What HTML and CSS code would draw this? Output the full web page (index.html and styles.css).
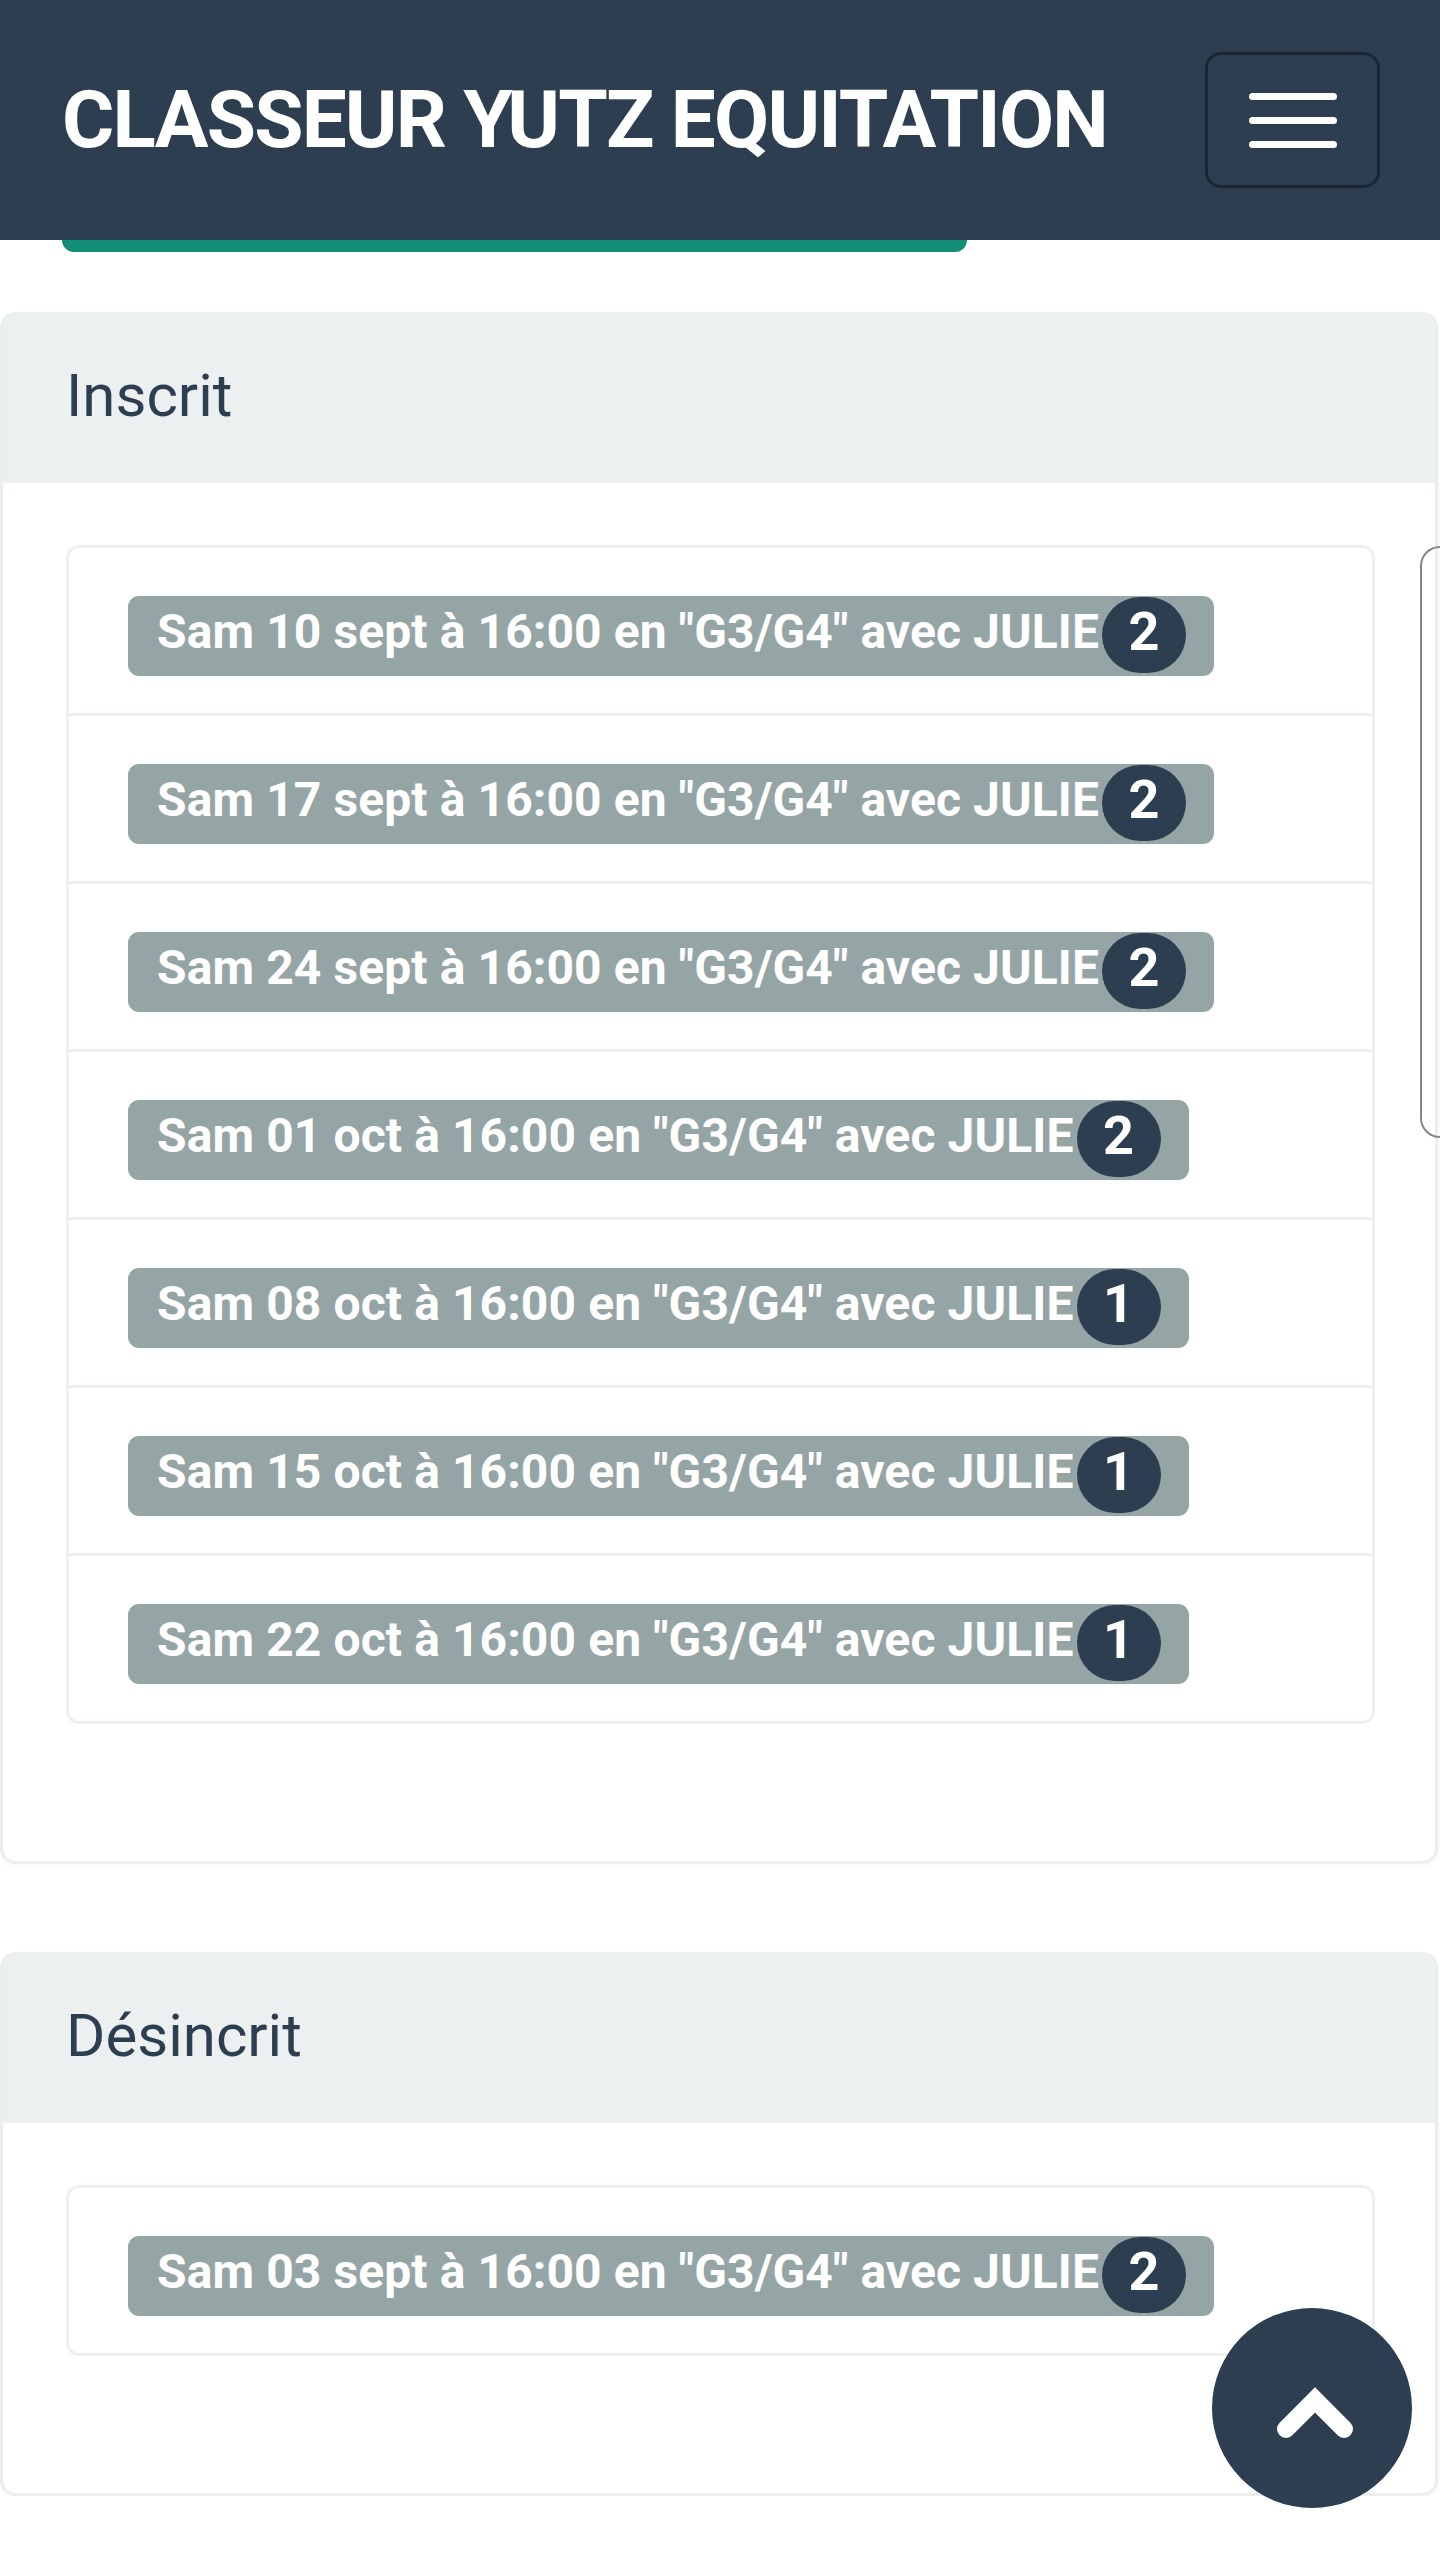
FILE: index.html
```
<!DOCTYPE html>
<html lang="fr">
<head>
	<meta charset="UTF-8">
	<meta name="viewport" content="width=device-width, initial-scale=1.0">
	<title>Classeur Yutz Equitation</title>
	<link rel="stylesheet" href="styles.css">
</head>

<body>
	<header class="navbar">
		<h1 class="brand">CLASSEUR YUTZ EQUITATION</h1>
		<button type="button" class="toggler" title="Menu">
			<span class="toggler-bar"></span>
			<span class="toggler-bar"></span>
			<span class="toggler-bar"></span>
		</button>
	</header>
	<div class="btn-peek"></div>

	<main>
		<section class="card">
			<h2 class="card-header">Inscrit</h2>
			<div class="card-body">
				<ul class="list-group">
					<li class="list-item"><span class="badge">Sam 10 sept à 16:00 en "G3/G4" avec JULIE<span class="pill">2</span></span></li>
					<li class="list-item"><span class="badge">Sam 17 sept à 16:00 en "G3/G4" avec JULIE<span class="pill">2</span></span></li>
					<li class="list-item"><span class="badge">Sam 24 sept à 16:00 en "G3/G4" avec JULIE<span class="pill">2</span></span></li>
					<li class="list-item"><span class="badge">Sam 01 oct à 16:00 en "G3/G4" avec JULIE<span class="pill">2</span></span></li>
					<li class="list-item"><span class="badge">Sam 08 oct à 16:00 en "G3/G4" avec JULIE<span class="pill">1</span></span></li>
					<li class="list-item"><span class="badge">Sam 15 oct à 16:00 en "G3/G4" avec JULIE<span class="pill">1</span></span></li>
					<li class="list-item"><span class="badge">Sam 22 oct à 16:00 en "G3/G4" avec JULIE<span class="pill">1</span></span></li>
				</ul>
			</div>
		</section>

		<section class="card">
			<h2 class="card-header">Désincrit</h2>
			<div class="card-body">
				<ul class="list-group">
					<li class="list-item"><span class="badge">Sam 03 sept à 16:00 en "G3/G4" avec JULIE<span class="pill">2</span></span></li>
				</ul>
			</div>
		</section>
	</main>

	<div class="popover-edge"></div>

	<button type="button" class="to-top" title="Haut de page">
		<svg width="200" height="200" viewBox="0 0 200 200"><polyline points="74,121 103,92 132,121" fill="none" stroke="#fff" stroke-width="18" stroke-linejoin="miter" stroke-linecap="round"/></svg>
	</button>
</body>

</html>
```

FILE: styles.css
```
body {
	margin: 0;
	font-family: Roboto, "Noto Sans", sans-serif;
	color: #2c3e50;
	background: #fff;
}

.navbar {
	height: 240px;
	box-sizing: border-box;
	padding: 0 60px 0 62px;
	display: flex;
	align-items: center;
	justify-content: space-between;
	background-color: #2c3e50;
}
.brand {margin: 0; font-size: 80px; font-weight: 700; color: #fff; line-height: 1; letter-spacing: -1.8px;}
.toggler {
	width: 175px; height: 136px;
	box-sizing: border-box;
	border: 3px solid #1b2633;
	border-radius: 16px;
	background: transparent;
	display: flex; flex-direction: column; align-items: center; justify-content: center;
	gap: 17px;
	padding: 0;
}
.toggler-bar {display: block; width: 88px; height: 7px; border-radius: 4px; background: #fff;}

.btn-peek {margin-left: 62px; width: 905px; height: 12px; background: #138e76; border-radius: 0 0 14px 14px;}

main {padding-top: 60px; display: flex; flex-direction: column; gap: 88px;}

.card {
	width: 1438px;
	box-sizing: border-box;
	border: 3px solid #eaeeef;
	border-radius: 16px;
	box-shadow: 0 2px 4px rgba(0, 0, 0, 0.04);
	overflow: hidden;
}
.card-header {
	margin: 0;
	height: 168px;
	box-sizing: border-box;
	padding: 0 0 6px 63px;
	display: flex; align-items: center;
	background: #ecf0f1;
	font-size: 60px; font-weight: 400; line-height: 1;
}
.card-body {padding: 62px 60px 137px 63px;}

.list-group {list-style: none; margin: 0; padding: 0; border: 3px solid #ecf0f1; border-radius: 13px;}
.list-item {padding: 48px 59px 37px; display: flex;}
.list-item + .list-item {border-top: 3px solid #ecf0f1;}

.badge {
	height: 80px;
	box-sizing: border-box;
	padding: 0 28px 9px 29px;
	display: inline-flex; align-items: center;
	background: #95a5a6;
	border-radius: 11px;
	color: #fff;
	font-size: 48px; font-weight: 700; line-height: 1; letter-spacing: 0.1px;
	white-space: nowrap;
}
.pill {
	align-self: flex-start;
	width: 84px; height: 76px;
	box-sizing: border-box;
	padding-bottom: 7px;
	margin-top: 1px; margin-left: 3px;
	display: inline-flex; align-items: center; justify-content: center;
	background: #2c3e50;
	border-radius: 38px;
	font-size: 54px; letter-spacing: 0;
}

.popover-edge {
	position: absolute; left: 1420px; top: 546px;
	width: 18px; height: 588px;
	border: 2px solid #858585; border-right: 0;
	border-radius: 48px 0 0 48px;
}

.to-top {
	position: fixed; left: 1212px; top: 2308px;
	width: 200px; height: 200px;
	padding: 0; border: 0; border-radius: 50%;
	background: #2c3e50;
}
.to-top svg {display: block;}
```
